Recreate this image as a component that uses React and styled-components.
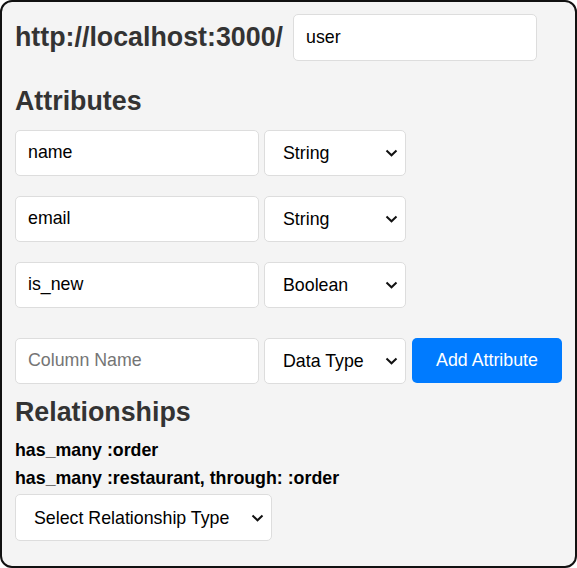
import React from "react";
import styled, { createGlobalStyle } from "styled-components";

const GlobalStyle = createGlobalStyle`
  * {
    box-sizing: border-box;
  }
  body {
    margin: 0;
    font-family: "Liberation Sans", Arial, sans-serif;
    background: #ffffff;
  }
`;

const attributes = [
  { name: "name", type: "String" },
  { name: "email", type: "String" },
  { name: "is_new", type: "Boolean" },
];

const relationships = ["has_many :order", "has_many :restaurant, through: :order"];

const Chevron = () => (
  <ChevronIcon width="13" height="8" viewBox="0 0 13 8">
    <path d="M1.5 1.5 L6.5 6.3 L11.5 1.5" fill="none" stroke="#111" strokeWidth="2" />
  </ChevronIcon>
);

const Dropdown = ({ width, height = 46, children, defaultValue }) => (
  <SelectWrap $width={width} $height={height}>
    <Select defaultValue={defaultValue}>{children}</Select>
    <Chevron />
  </SelectWrap>
);

const App = () => {
  return (
    <>
      <GlobalStyle />
      <Card>
        <HeaderRow>
          <BaseUrl>http://localhost:3000/</BaseUrl>
          <TextInput $width={244} $height={47} defaultValue="user" />
        </HeaderRow>

        <SectionTitle $top={25}>Attributes</SectionTitle>
        <FieldList>
          {attributes.map((attr) => (
            <FieldRow key={attr.name}>
              <TextInput $width={244} defaultValue={attr.name} />
              <Dropdown width={142} defaultValue={attr.type}>
                <option>String</option>
                <option>Integer</option>
                <option>Boolean</option>
              </Dropdown>
            </FieldRow>
          ))}
        </FieldList>

        <NewFieldRow>
          <TextInput $width={244} placeholder="Column Name" />
          <Dropdown width={142} defaultValue="">
            <option value="">Data Type</option>
            <option>String</option>
            <option>Integer</option>
            <option>Boolean</option>
          </Dropdown>
          <AddButton>Add Attribute</AddButton>
        </NewFieldRow>

        <SectionTitle $top={13}>Relationships</SectionTitle>
        <RelationList>
          {relationships.map((rel) => (
            <Relation key={rel}>{rel}</Relation>
          ))}
        </RelationList>
        <Dropdown width={257} height={47} defaultValue="">
          <option value="">Select Relationship Type</option>
          <option>has_many</option>
          <option>belongs_to</option>
          <option>has_one</option>
        </Dropdown>
      </Card>
    </>
  );
};

const Card = styled.div`
  width: 577px;
  height: 568px;
  border: 2px solid #111;
  border-radius: 12px;
  background-color: #f4f4f4;
  padding: 12px 13px;
  display: flex;
  flex-direction: column;
  align-items: flex-start;
`;

const HeaderRow = styled.div`
  display: flex;
  align-items: center;
  gap: 10px;
`;

const BaseUrl = styled.h1`
  margin: 0;
  font-size: 26.8px;
  font-weight: bold;
  color: #333;
`;

const SectionTitle = styled.h2`
  margin: ${(props) => props.$top}px 0 0;
  font-size: 26.8px;
  font-weight: bold;
  color: #333;
  line-height: 30.7px;
`;

const FieldList = styled.div`
  margin-top: 13px;
  display: flex;
  flex-direction: column;
  gap: 20px;
`;

const FieldRow = styled.div`
  display: flex;
  gap: 5px;
`;

const NewFieldRow = styled.div`
  display: flex;
  align-items: center;
  gap: 5px;
  margin-top: 30px;
`;

const TextInput = styled.input`
  width: ${(props) => props.$width}px;
  height: ${(props) => props.$height || 46}px;
  padding: 0 12px;
  border: 1px solid #ddd;
  border-radius: 5px;
  background: #fff;
  font-family: "Liberation Sans", Arial, sans-serif;
  font-size: 17.8px;
  color: #000;
  outline: none;

  &::placeholder {
    color: #757575;
  }
`;

const SelectWrap = styled.div`
  position: relative;
  width: ${(props) => props.$width}px;
  height: ${(props) => props.$height}px;
`;

const Select = styled.select`
  appearance: none;
  width: 100%;
  height: 100%;
  padding: 0 30px 0 18px;
  border: 1px solid #ddd;
  border-radius: 5px;
  background: #fff;
  font-family: "Liberation Sans", Arial, sans-serif;
  font-size: 17.8px;
  color: #000;
  outline: none;
`;

const ChevronIcon = styled.svg`
  position: absolute;
  right: 8px;
  top: 50%;
  margin-top: -4px;
  pointer-events: none;
`;

const AddButton = styled.button`
  width: 150px;
  height: 45px;
  margin-left: 1px;
  border: none;
  border-radius: 5px;
  background-color: #007bff;
  color: #fff;
  font-family: "Liberation Sans", Arial, sans-serif;
  font-size: 17.8px;
  cursor: pointer;
`;

const RelationList = styled.div`
  margin: 13px 0 6px;
  display: flex;
  flex-direction: column;
  gap: 7px;
`;

const Relation = styled.div`
  font-size: 17.8px;
  font-weight: bold;
  color: #000;
  line-height: 20.5px;
`;

export default App;
